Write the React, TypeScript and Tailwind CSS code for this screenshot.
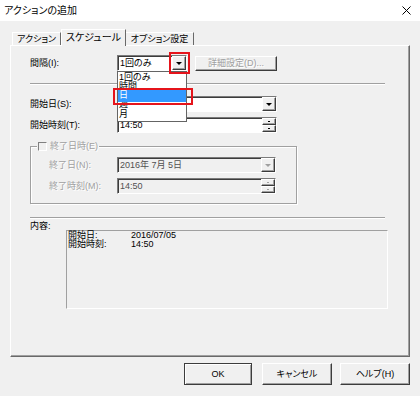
import React from 'react';

const sunken =
  'border border-t-[#7a7a7a] border-l-[#7a7a7a] border-b-white border-r-white shadow-[inset_1px_1px_0_#3c3c3c]';
const raised =
  'border border-t-white border-l-white border-b-[#3c3c3c] border-r-[#3c3c3c] shadow-[inset_-1px_-1px_0_#a0a0a0]';
const disabledText = 'text-[#a0a0a0] [text-shadow:1px_1px_0_#fff]';

function DropBtn({ disabled = false }: { disabled?: boolean }) {
  return (
    <span className={`${raised} w-[14px] h-full bg-[#f0f0f0] flex items-center justify-center`}>
      <span
        className={`w-0 h-0 border-x-[3px] border-x-transparent border-t-[3px] ${
          disabled ? 'border-t-[#a0a0a0]' : 'border-t-black'
        }`}
      />
    </span>
  );
}

function SpinBtn({ disabled = false }: { disabled?: boolean }) {
  const arrow = disabled ? 'bg-[#a0a0a0]' : 'bg-black';
  return (
    <span className="w-[14px] h-full flex flex-col">
      <span className={`${raised} flex-1 bg-[#f0f0f0] flex items-center justify-center`}>
        <span className={`w-[2px] h-[1px] ${arrow}`} />
      </span>
      <span className={`${raised} flex-1 bg-[#f0f0f0] flex items-center justify-center`}>
        <span className={`w-[2px] h-[1px] ${arrow}`} />
      </span>
    </span>
  );
}

function Separator() {
  return <div className="w-[355px] h-[2px] border-t border-t-[#a0a0a0] border-b border-b-white" />;
}

export default function App() {
  return (
    <div className="relative w-[420px] h-[396px] overflow-hidden bg-[#f0f0f0] text-[9px] leading-[11px] text-black font-['Liberation_Sans','Noto_Sans_CJK_JP',sans-serif] [font-feature-settings:'palt']">
      {/* title bar */}
      <div className="h-[21px] bg-white flex items-center justify-between pl-[4px] pr-[9px]">
        <span className="text-[10px]">アクションの追加</span>
        <svg width="9" height="9" viewBox="0 0 9 9">
          <path d="M0.5 0.5 L8.5 8.5 M8.5 0.5 L0.5 8.5" stroke="#000" strokeWidth="1" />
        </svg>
      </div>

      {/* tabs */}
      <div className="h-[24px] flex items-end pl-[12px]">
        <div className="w-[49px] h-[13px] flex items-center justify-center border-t border-l border-r border-t-white border-l-white border-r-[#696969]">
          アクション
        </div>
        <div className="relative z-10 -mb-px w-[65px] h-[17px] pb-[2px] bg-[#f0f0f0] flex items-center justify-center border-t border-l border-r border-t-white border-l-white border-r-[#696969] text-[10px]">
          スケジュール
        </div>
        <div className="w-[68px] h-[13px] flex items-center justify-center border-t border-r border-t-white border-r-[#696969]">
          オプション設定
        </div>
      </div>

      {/* tab panel */}
      <div className="ml-[10px] w-[400px] h-[312px] border border-t-white border-l-white border-r-[#696969] border-b-[#696969] shadow-[inset_-1px_-1px_0_#a0a0a0] pl-[19px] pt-[9px]">
        <div className="flex items-center h-[16px]">
          <span className="w-[87px]">間隔(I):</span>
          <div className={`${sunken} w-[70px] h-[16px] bg-white flex items-center`}>
            <span className="flex-1 pl-[2px]">1回のみ</span>
            <DropBtn />
          </div>
          <div className={`${raised} ${disabledText} ml-[8px] w-[82px] h-[15px] flex items-center justify-center`}>
            詳細設定(D)...
          </div>
        </div>

        <div className="mt-[12px]">
          <Separator />
        </div>

        <div className="mt-[11px] flex items-center h-[16px]">
          <span className="w-[87px]">開始日(S):</span>
          <div className={`${sunken} w-[160px] h-[16px] bg-white flex items-center`}>
            <span className="flex-1" />
            <DropBtn />
          </div>
        </div>

        <div className="mt-[5px] flex items-center h-[16px]">
          <span className="w-[87px]">開始時刻(T):</span>
          <div className={`${sunken} w-[160px] h-[16px] bg-white flex items-center`}>
            <span className="flex-1 pl-[2px]">14:50</span>
            <SpinBtn />
          </div>
        </div>

        {/* end date group */}
        <div className="relative mt-[13px] w-[267px] h-[58px] border border-[#a0a0a0] shadow-[1px_1px_0_#fff,inset_1px_1px_0_#fff] pl-[18px] pt-[10px]">
          <div className="absolute -top-[6px] left-[6px] h-[11px] px-[1px] bg-[#f0f0f0] flex items-center gap-[3px]">
            <span className="w-[9px] h-[9px] border-t border-l border-t-[#808080] border-l-[#808080] border-b border-r border-b-white border-r-white" />
            <span className={disabledText}>終了日時(E)</span>
          </div>
          <div className="flex items-center h-[16px]">
            <span className={`w-[68px] ${disabledText}`}>終了日(N):</span>
            <div className={`${sunken} w-[159px] h-[16px] flex items-center text-[#505050]`}>
              <span className="flex-1 pl-[2px]">2016年 7月 5日</span>
              <DropBtn disabled />
            </div>
          </div>
          <div className="mt-[5px] flex items-center h-[16px]">
            <span className={`w-[68px] ${disabledText}`}>終了時刻(M):</span>
            <div className={`${sunken} w-[159px] h-[16px] flex items-center text-[#505050]`}>
              <span className="flex-1 pl-[2px]">14:50</span>
              <SpinBtn disabled />
            </div>
          </div>
        </div>

        <div className="mt-[13px]">
          <Separator />
        </div>

        {/* summary */}
        <div className="mt-[11px] flex">
          <span className="w-[36px] -mt-[9px] self-start">内容:</span>
          <div className="w-[322px] h-[79px] border border-t-[#a0a0a0] border-l-[#a0a0a0] border-b-white border-r-white pl-[1px] leading-[9px]">
            <div className="grid grid-cols-[63px_auto]">
              <span>開始日:</span>
              <span>2016/07/05</span>
              <span>開始時刻:</span>
              <span>14:50</span>
            </div>
          </div>
        </div>
      </div>

      {/* dialog buttons */}
      <div className="mt-[6px] flex h-[22px]">
        <div className="ml-[184px] w-[68px] h-full border border-[#3c3c3c] shadow-[inset_1px_1px_0_#fff,inset_-1px_-1px_0_#a0a0a0] flex items-center justify-center">
          OK
        </div>
        <div className={`${raised} ml-[10px] w-[70px] h-full flex items-center justify-center`}>キャンセル</div>
        <div className={`${raised} ml-[8px] w-[70px] h-full flex items-center justify-center`}>ヘルプ(H)</div>
      </div>

      {/* open dropdown list */}
      <div className="absolute left-[117px] top-[71px] w-[70px] h-[51px] bg-white border border-[#646464] overflow-hidden">
        <span className="absolute left-[1px] top-0">1回のみ</span>
        <span className="absolute left-[1px] top-[9px]">時間</span>
        <span className="absolute left-[1px] top-[27px]">週</span>
        <div className="absolute left-0 right-0 top-[17px] h-[13px] bg-[#3399ff] text-white pl-[1px] flex items-center">日</div>
        <span className="absolute left-[1px] top-[37px]">月</span>
      </div>

      {/* red highlight boxes */}
      <div className="absolute left-[169px] top-[52px] w-[21px] h-[22px] border-2 border-[#e5141b]" />
      <div className="absolute left-[113px] top-[88px] w-[80px] h-[17px] border-2 border-[#e5141b]" />
    </div>
  );
}
